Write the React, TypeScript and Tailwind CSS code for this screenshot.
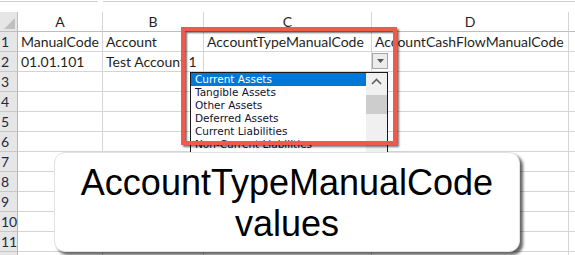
import React from "react";

// Excel sheet with an open data-validation dropdown and a callout label

const columns = [
  { key: "A", w: "w-[85px]" },
  { key: "B", w: "w-[101px]" },
  { key: "C", w: "w-[168px]" },
  { key: "D", w: "w-[197px]" },
];

const cellData: Record<number, string[]> = {
  1: ["ManualCode", "Account", "AccountTypeManualCode", "AccountCashFlowManualCode"],
  2: ["01.01.101", "Test Account 1", "", ""],
};

const listItems = [
  "Current Assets",
  "Tangible Assets",
  "Other Assets",
  "Deferred Assets",
  "Current Liabilities",
  "Non-Current Liabilities",
  "Equity",
];

// row 12 is only a sliver at the bottom edge, so its number is not shown
const rowNumbers = Array.from({ length: 12 }, (_, i) => i + 1);

const App: React.FC = () => {
  return (
    <div className="relative w-[575px] h-[255px] overflow-hidden bg-white font-['Lato',sans-serif] text-[14px] text-[#1f1f1f]">
      {/* Formula bar remnants */}
      <div className="flex h-[12px] items-start">
        <div className="w-[98px] h-[2px] border-b border-[#d0d0d0]" />
        <div className="w-[5px]" />
        <div className="flex-1 h-[2px] border-b border-[#d0d0d0]" />
      </div>

      {/* Column headers */}
      <div className="flex h-[20px]">
        <div className="relative w-[18px] shrink-0 bg-[#e6e6e6] border-r border-b border-[#bdbdbd]">
          <svg className="absolute right-[2px] bottom-[2px]" width="11" height="11" viewBox="0 0 11 11">
            <polygon points="11,0 11,11 0,11" fill="#bfbfbf" />
          </svg>
        </div>
        {columns.map((c) => (
          <div
            key={c.key}
            className={`${c.w} shrink-0 flex items-center justify-center border-r border-b border-[#d4d4d4] border-b-[#bdbdbd] leading-none pt-[1px]`}
          >
            {c.key}
          </div>
        ))}
        <div className="flex-1 border-b border-[#bdbdbd]" />
      </div>

      {/* Rows */}
      {rowNumbers.map((n) => (
        <div key={n} className="flex h-[20px]">
          <div className="w-[18px] shrink-0 bg-[#e6e6e6] border-r border-b border-r-[#b5b5b5] border-b-[#c8c8c8] flex items-end pl-[1px] pb-[1px] leading-[17px] text-[#1d2a44]">
            {n < 12 ? n : ""}
          </div>
          {columns.map((c, i) => (
            <div
              key={c.key}
              className={`${c.w} shrink-0 border-r border-b border-[#d4d4d4] flex items-end pl-[3px] pb-[1px] leading-[17px] whitespace-nowrap`}
            >
              {cellData[n]?.[i] ?? ""}
            </div>
          ))}
          <div className="flex-1 border-b border-[#d4d4d4]" />
        </div>
      ))}

      {/* Dropdown arrow button */}
      <div className="absolute left-[372px] top-[53px] w-[16px] h-[16px] border border-[#a6a6a6] bg-[#ececec] flex items-center justify-center">
        <svg width="7" height="4" viewBox="0 0 7 4">
          <polygon points="0,0 7,0 3.5,4" fill="#555" />
        </svg>
      </div>

      {/* Dropdown list */}
      <div className="absolute left-[190px] top-[72px] w-[198px] h-[90px] border border-[#1a1a1a] bg-white flex font-['DejaVu_Sans',sans-serif] text-[10.5px] text-[#101030]">
        <div className="flex-1 flex flex-col">
          {listItems.map((item, i) => (
            <div
              key={item}
              className={`h-[13px] leading-[13px] pl-[4px] whitespace-nowrap ${i === 0 ? "bg-[#0078d7] text-white" : ""}`}
            >
              {item}
            </div>
          ))}
        </div>
        <div className="w-[21px] bg-[#f0f0f0] flex flex-col items-center">
          <div className="h-[17px] flex items-center justify-center">
            <svg width="11" height="7" viewBox="0 0 11 7">
              <polyline points="1,6 5.5,1.5 10,6" fill="none" stroke="#606060" strokeWidth="1.6" />
            </svg>
          </div>
          <div className="mt-[5px] w-full h-[19px] bg-[#cdcdcd]" />
        </div>
      </div>

      {/* Red highlight frame */}
      <div className="absolute left-[181px] top-[27px] w-[216px] h-[118px] border-4 border-[#ef5a4f] shadow-[2px_2px_2px_rgba(0,0,0,0.55),inset_2px_2px_2px_rgba(0,0,0,0.55)]" />

      {/* Callout */}
      <div className="absolute left-[54px] top-[152px] w-[466px] h-[100px] rounded-[11px] bg-white border border-[#e2e2e2] shadow-[3px_3px_3px_rgba(0,0,0,0.6)] flex items-start justify-center pt-[9px] text-center font-['Liberation_Sans',Arial,sans-serif] text-[36px] leading-[41px] text-black">
        AccountTypeManualCode
        <br />
        values
      </div>
    </div>
  );
};

export default App;
